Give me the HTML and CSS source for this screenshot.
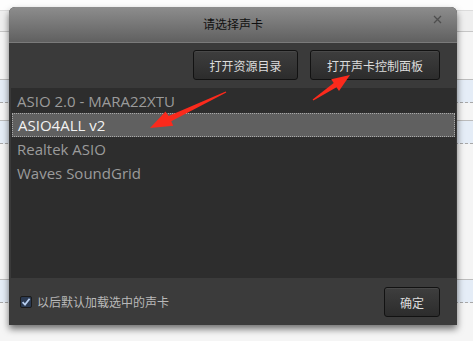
FILE: index.html
```html
<!DOCTYPE html>
<html>
<head>
<meta charset="utf-8">
<link rel="stylesheet" href="styles.css">
</head>
<body>
<div class="page">
  <div class="bg-top"></div>
  <div class="bg-head"></div>
  <div class="bg-gap g1"></div>
  <div class="bg-band"></div>
  <div class="bg-gap g2"></div>
  <div class="bg-band"></div>
  <div class="bg-gap g3"></div>
  <div class="bg-band"></div>
  <div class="bg-gap g4"></div>
</div>

<div class="dialog">
  <div class="titlebar">
    <span class="title">请选择声卡</span>
    <svg class="close" width="9" height="9" viewBox="0 0 9 9"><path d="M1 1L8 8M8 1L1 8" stroke="#4e4e4e" stroke-width="1.3"/></svg>
  </div>
  <div class="toolbar">
    <button class="btn b1">打开资源目录</button>
    <button class="btn b2">打开声卡控制面板</button>
  </div>
  <div class="list">
    <div class="item">ASIO 2.0 - MARA22XTU</div>
    <div class="item sel">ASIO4ALL v2</div>
    <div class="item">Realtek ASIO</div>
    <div class="item">Waves SoundGrid</div>
  </div>
  <div class="footer">
    <label class="check">
      <svg class="box" width="12" height="12" viewBox="0 0 12 12"><rect x="0.5" y="0.5" width="11" height="11" rx="1.5" fill="#2b3a52" stroke="#1b1b1b"/><path d="M2.6 6.2L5 8.6L9.6 2.8" fill="none" stroke="#b6cdee" stroke-width="1.8"/></svg>
      <span>以后默认加载选中的声卡</span>
    </label>
    <button class="btn ok">确定</button>
  </div>
</div>

<svg class="arrows" width="473" height="341" viewBox="0 0 473 341">
  <polygon fill="#fb2a1c" points="150,128 173.3,125.8 171.2,121.3 226.3,92.6 225.7,91.4 168.6,115.9 165.5,111.4"/>
  <polygon fill="#fb2a1c" points="350,75 339,90.9 336.5,87.2 313.4,100.6 312.6,99.4 333.7,83 331.2,79.3"/>
</svg>
</body>
</html>
```
FILE: styles.css
```css
html, body {
  margin: 0;
  padding: 0;
}
body {
  width: 473px;
  height: 341px;
  position: relative;
  overflow: hidden;
  background: #f5f5f5;
  font-family: "Noto Sans CJK SC", "Noto Sans", sans-serif;
}
.page {
  display: flex;
  flex-direction: column;
}
.bg-top { height: 10px; background: #fdfdfd; }
.bg-head {
  height: 20px;
  background: #efefef;
  border-top: 1px solid #dcdcdc;
  border-bottom: 1px solid #c6c6c6;
}
.bg-gap { background: #f5f5f5; }
.g1 { height: 47px; }
.g2 { height: 17px; }
.g3 { height: 135px; }
.g4 { height: 40px; }
.bg-band {
  height: 22px;
  background: #e5edf7;
  border-top: 1px solid #bcbcbc;
  border-bottom: 1px dashed #a8a8a8;
}

.dialog {
  position: absolute;
  left: 9px;
  top: 7px;
  width: 448px;
  height: 318px;
  border-radius: 6px 6px 0 0;
  background: #3a3a3a;
  box-shadow: 0 4px 7px rgba(0, 0, 0, 0.55);
  display: flex;
  flex-direction: column;
  overflow: hidden;
}
.titlebar {
  height: 35px;
  flex: none;
  background: linear-gradient(#8d8d8d, #606060);
  border-bottom: 1px solid #7a7a7a;
  position: relative;
  display: flex;
  align-items: center;
  justify-content: center;
}
.title {
  font-size: 12px;
  color: #101010;
  margin-top: -3px;
}
.close {
  position: absolute;
  right: 15px;
  top: 8px;
}
.toolbar {
  height: 45px;
  flex: none;
  display: flex;
  justify-content: flex-end;
  align-items: flex-start;
  gap: 12px;
  padding: 7px 17px 0 0;
  box-sizing: border-box;
}
.btn {
  height: 30px;
  border: 1px solid #121212;
  border-radius: 3px;
  background: linear-gradient(#3e3e3e, #2c2c2c);
  color: #dcdcdc;
  font-family: "Noto Sans CJK SC", sans-serif;
  font-size: 12px;
  padding: 0;
  box-shadow: inset 0 1px 0 rgba(255,255,255,0.06);
}
.b1 { width: 105px; }
.b2 { width: 130px; }
.list {
  height: 190px;
  flex: none;
  margin: 0 1px 0 2px;
  background: #2d2d2d;
  padding-top: 1px;
  box-sizing: border-box;
}
.item {
  height: 24px;
  line-height: 24px;
  padding-left: 6px;
  font-family: "Open Sans", "Noto Sans", sans-serif;
  font-size: 15px;
  color: #9b9b9b;
  box-sizing: border-box;
}
.item.sel {
  background: #606060;
  color: #f2f2f2;
  border: 1px dotted #a9a9a9;
  margin: 0 1px;
  padding-left: 5px;
  line-height: 22px;
}
.footer {
  flex: 1;
  background: #3b3b3b;
  display: flex;
  align-items: center;
  justify-content: space-between;
  padding: 0 17px 0 11px;
}
.check {
  display: flex;
  align-items: center;
  gap: 5px;
  font-size: 12px;
  color: #b9b9b9;
}
.ok {
  width: 56px;
  margin-top: 1px;
}
.arrows {
  position: absolute;
  left: 0;
  top: 0;
}
```
